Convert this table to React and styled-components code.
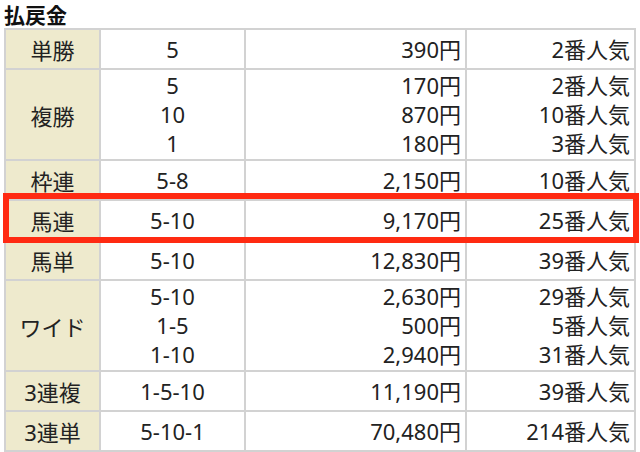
import React from "react";
import styled, { createGlobalStyle } from "styled-components";

const GlobalStyle = createGlobalStyle`
  body {
    margin: 0;
    background: #fff;
    font-family: "Noto Sans", "Noto Sans CJK JP", sans-serif;
    color: #222;
  }
`;

const payouts = [
  { type: "単勝", rows: [["5", "390円", "2番人気"]] },
  {
    type: "複勝",
    rows: [
      ["5", "170円", "2番人気"],
      ["10", "870円", "10番人気"],
      ["1", "180円", "3番人気"],
    ],
  },
  { type: "枠連", rows: [["5-8", "2,150円", "10番人気"]] },
  { type: "馬連", rows: [["5-10", "9,170円", "25番人気"]] },
  { type: "馬単", rows: [["5-10", "12,830円", "39番人気"]] },
  {
    type: "ワイド",
    rows: [
      ["5-10", "2,630円", "29番人気"],
      ["1-5", "500円", "5番人気"],
      ["1-10", "2,940円", "31番人気"],
    ],
  },
  { type: "3連複", rows: [["1-5-10", "11,190円", "39番人気"]] },
  { type: "3連単", rows: [["5-10-1", "70,480円", "214番人気"]] },
];

export default function App() {
  return (
    <Page>
      <GlobalStyle />
      <Title>払戻金</Title>
      <TableWrap>
        <Table>
          <colgroup>
            <col style={{ width: 95 }} />
            <col style={{ width: 145 }} />
            <col style={{ width: 221 }} />
            <col style={{ width: 169 }} />
          </colgroup>
          <tbody>
            {payouts.map((p) => (
              <Row key={p.type} $multi={p.rows.length > 1}>
                <Head>{p.type}</Head>
                <Cell $align="center">
                  {p.rows.map((r, i) => (
                    <Line key={i}>{r[0]}</Line>
                  ))}
                </Cell>
                <Cell $align="right">
                  {p.rows.map((r, i) => (
                    <Line key={i}>{r[1]}</Line>
                  ))}
                </Cell>
                <Cell $align="right">
                  {p.rows.map((r, i) => (
                    <Line key={i}>{r[2]}</Line>
                  ))}
                </Cell>
              </Row>
            ))}
          </tbody>
        </Table>
        <Marker />
      </TableWrap>
    </Page>
  );
}

const Page = styled.div`
  width: 640px;
  height: 452px;
  overflow: hidden;
`;

const Title = styled.div`
  font-family: "Noto Sans CJK JP", sans-serif;
  font-size: 21px;
  font-weight: bold;
  line-height: 28px;
  padding-left: 4px;
  color: #111;
`;

const TableWrap = styled.div`
  position: relative;
  padding-left: 4px;
`;

const Table = styled.table`
  border-collapse: collapse;
  table-layout: fixed;
  width: 630px;
  font-size: 22px;
  td {
    border: 2px solid #d2d2d2;
  }
`;

const Row = styled.tr`
  height: ${(p) => (p.$multi ? "91px" : "40px")};
`;

const Head = styled.td`
  background: #eeeacd;
  text-align: center;
  padding: 0;
`;

const Cell = styled.td`
  text-align: ${(p) => p.$align};
  padding: 0 4px;
  vertical-align: middle;
`;

const Line = styled.div`
  line-height: 29px;
`;

const Marker = styled.div`
  position: absolute;
  left: 3px;
  right: 1px;
  top: 165px;
  height: 50px;
  border: 6px solid #ff2a12;
  box-sizing: border-box;
`;
